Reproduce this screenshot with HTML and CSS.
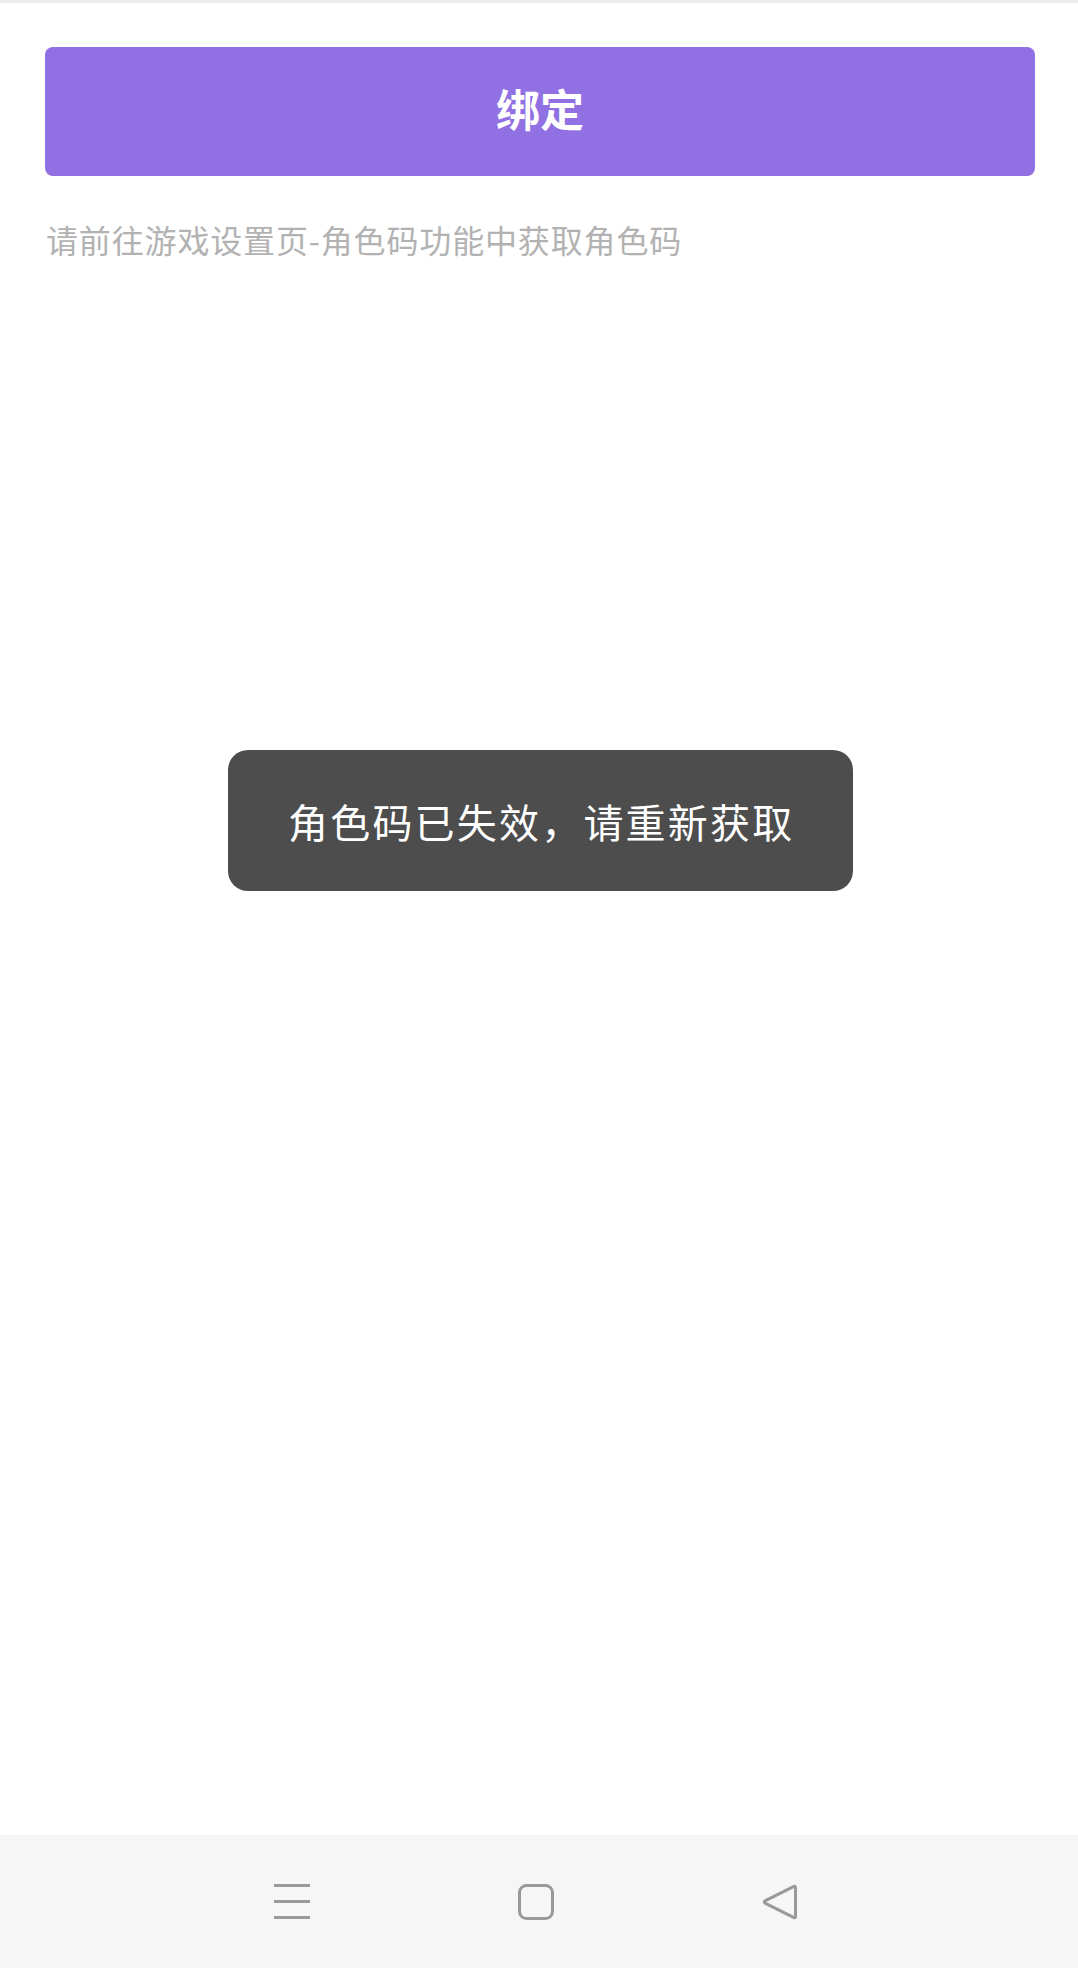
FILE: index.html
```html
<!DOCTYPE html>
<html lang="zh-CN">
<head>
<meta charset="utf-8">
<title>绑定角色码</title>
<link rel="stylesheet" href="styles.css">
</head>
<body>
<div class="screen">
  <div class="top-strip"></div>
  <main class="content">
    <button class="bind-btn" type="button">绑定</button>
    <p class="hint">请前往游戏设置页-角色码功能中获取角色码</p>
  </main>
  <div class="toast">角色码已失效，请重新获取</div>
  <nav class="navbar">
    <svg class="nav-icon" viewBox="0 0 36 36" width="36" height="36" aria-hidden="true">
      <path d="M0 1.5H36M0 17.5H36M0 33.5H36" stroke="#999" stroke-width="3" fill="none"/>
    </svg>
    <svg class="nav-icon" viewBox="0 0 36 36" width="36" height="36" aria-hidden="true">
      <rect x="1.5" y="1.5" width="33" height="33" rx="7" ry="7" stroke="#999" stroke-width="3" fill="none"/>
    </svg>
    <svg class="nav-icon" viewBox="0 0 36 36" width="36" height="36" aria-hidden="true">
      <path d="M33.5 3.5 L33.5 32.5 Q33.5 34.5 31.5 33.3 L3 19.2 Q1.5 18 3 16.8 L31.5 2.7 Q33.5 1.5 33.5 3.5 Z" stroke="#999" stroke-width="3" stroke-linejoin="round" fill="none"/>
    </svg>
  </nav>
</div>
</body>
</html>
```

FILE: styles.css
```css
* {
  box-sizing: border-box;
}

html, body {
  margin: 0;
  padding: 0;
  background: #ffffff;
}

body {
  font-family: "Noto Sans CJK SC", "Noto Sans", sans-serif;
}

.screen {
  position: relative;
  width: 1078px;
  height: 1968px;
  display: flex;
  flex-direction: column;
  overflow: hidden;
}

.top-strip {
  height: 3px;
  background: #ececec;
  flex: none;
}

.content {
  flex: 1;
  padding: 44px 43px 0 45px;
}

.bind-btn {
  display: block;
  width: 100%;
  height: 129px;
  border: none;
  border-radius: 8px;
  background: #9070e2;
  color: #ffffff;
  font-family: "Noto Sans CJK SC", sans-serif;
  font-weight: 700;
  font-size: 44px;
  line-height: 1;
  padding: 0 0 7px 0;
}

.hint {
  margin: 47px 0 0 1px;
  font-size: 32px;
  line-height: 1;
  letter-spacing: 0.85px;
  color: #b2b2b2;
}

.toast {
  position: absolute;
  left: 228px;
  top: 750px;
  height: 141px;
  padding: 0 59px 0 60px;
  display: flex;
  align-items: center;
  background: #4d4d4d;
  border-radius: 20px;
  color: #ffffff;
  font-size: 40px;
  letter-spacing: 2.2px;
  white-space: nowrap;
  line-height: 1;
}

.navbar {
  flex: none;
  height: 133px;
  background: #f6f6f6;
  display: flex;
  align-items: center;
  justify-content: center;
  gap: 208px;
  padding-right: 6px;
}

.nav-icon {
  display: block;
  overflow: visible;
}
```
